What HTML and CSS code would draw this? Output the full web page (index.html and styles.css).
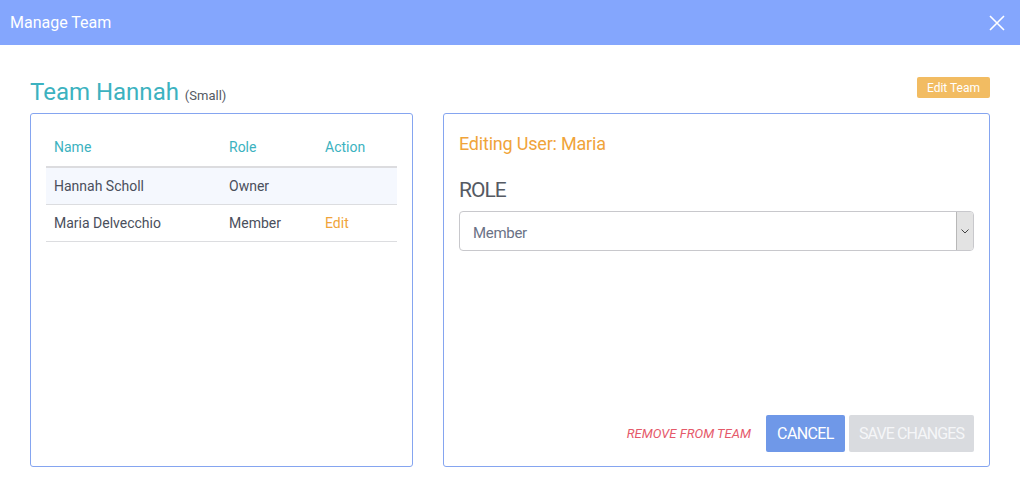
FILE: index.html
```html
<!DOCTYPE html>
<html lang="en">
<head>
    <meta charset="UTF-8">
    <title>Manage Team</title>
    <link rel="stylesheet" href="styles.css">
</head>
<body>
    <div class="modal">
        <div class="modal-header">
            <span class="modal-title">Manage Team</span>
            <button class="close-btn" aria-label="Close">
                <svg width="16" height="16" viewBox="0 0 16 16"><path d="M1 1L15 15M15 1L1 15" stroke="#fff" stroke-width="1.6" fill="none"/></svg>
            </button>
        </div>

        <div class="modal-body">
            <div class="team-head">
                <h2 class="team-name">Team Hannah <small>(Small)</small></h2>
                <button class="edit-team-btn">Edit Team</button>
            </div>

            <div class="panels">
                <div class="panel members">
                    <table class="team-table">
                        <thead>
                            <tr><th class="col-name">Name</th><th class="col-role">Role</th><th>Action</th></tr>
                        </thead>
                        <tbody>
                            <tr class="highlight"><td>Hannah Scholl</td><td>Owner</td><td></td></tr>
                            <tr><td>Maria Delvecchio</td><td>Member</td><td><a class="edit-link" href="#">Edit</a></td></tr>
                        </tbody>
                    </table>
                </div>

                <div class="panel editor">
                    <div class="editing-title">Editing User: Maria</div>
                    <label class="role-label" for="roleSelect">ROLE</label>
                    <div class="select-wrap">
                        <select id="roleSelect">
                            <option>Member</option>
                            <option>Owner</option>
                        </select>
                        <span class="select-arrow">
                            <svg width="8" height="5" viewBox="0 0 8 5"><path d="M0.5 0.5L4 4L7.5 0.5" stroke="#444" stroke-width="1" fill="none"/></svg>
                        </span>
                    </div>
                    <div class="editor-actions">
                        <a class="remove-link" href="#">REMOVE FROM TEAM</a>
                        <button class="btn btn-cancel">CANCEL</button>
                        <button class="btn btn-save" disabled>SAVE CHANGES</button>
                    </div>
                </div>
            </div>
        </div>
    </div>
</body>
</html>
```

FILE: styles.css
```css
* {
    margin: 0;
    padding: 0;
    box-sizing: border-box;
}

body {
    font-family: Roboto, 'Liberation Sans', sans-serif;
    background-color: #fff;
    color: #4a4f5c;
}

.modal-header {
    height: 45px;
    background-color: #84a6fd;
    display: flex;
    align-items: center;
    justify-content: space-between;
    padding: 0 15px 0 10px;
}

.modal-title {
    color: #fff;
    font-size: 16px;
}

.close-btn {
    background: none;
    border: none;
    display: flex;
    cursor: pointer;
}

.modal-body {
    padding: 31px 30px 20px;
}

.team-head {
    display: flex;
    justify-content: space-between;
    align-items: flex-start;
    height: 37px;
}

.team-name {
    font-weight: 400;
    font-size: 24px;
    color: #3cb2c0;
    line-height: 32px;
}

.team-name small {
    font-size: 13px;
    color: #555a63;
}

.edit-team-btn {
    margin-top: 1px;
    background-color: #f2bc62;
    color: #fff;
    border: none;
    border-radius: 2px;
    font-family: inherit;
    font-size: 12px;
    height: 21px;
    padding: 0 10px;
}

.panels {
    display: flex;
    gap: 30px;
}

.panel {
    border: 1px solid #85a5f0;
    border-radius: 3px;
    height: 354px;
}

.members {
    width: 383px;
    padding: 17px 15px;
}

.editor {
    flex: 1;
    padding: 19px 15px 14px;
    display: flex;
    flex-direction: column;
}

.team-table {
    width: 100%;
    border-collapse: collapse;
    font-size: 14px;
}

.team-table th {
    text-align: left;
    font-weight: 400;
    color: #3cb2c0;
    height: 36px;
    padding: 0 8px 4px;
    border-bottom: 2px solid #dcdcdf;
}

.team-table .col-name {
    width: 175px;
}

.team-table .col-role {
    width: 96px;
}

.team-table td {
    height: 37px;
    padding: 0 8px;
    border-bottom: 1px solid #dcdde0;
    color: #4a4f5c;
}

.team-table tr.highlight td {
    background-color: #f5f8fe;
}

.edit-link {
    color: #f0a43a;
    text-decoration: none;
}

.editing-title {
    color: #f0a43a;
    font-size: 18px;
    letter-spacing: -0.2px;
}

.role-label {
    margin-top: 24px;
    font-size: 21px;
    color: #555a63;
    letter-spacing: -1px;
}

.select-wrap {
    position: relative;
    margin-top: 9px;
    height: 40px;
}

.select-wrap select {
    width: 100%;
    height: 40px;
    appearance: none;
    border: 1px solid #c8c8cc;
    border-radius: 4px;
    background: #fff;
    font-family: inherit;
    font-size: 15px;
    color: #6a7286;
    padding: 3px 13px 0;
    letter-spacing: -0.3px;
}

.select-arrow {
    position: absolute;
    top: 1px;
    right: 1px;
    width: 17px;
    height: 38px;
    background: #e3e3e3;
    border-left: 1px solid #b8b8b8;
    border-radius: 0 3px 3px 0;
    display: flex;
    align-items: center;
    justify-content: center;
}

.editor-actions {
    margin-top: auto;
    display: flex;
    justify-content: flex-end;
    align-items: center;
    gap: 4px;
}

.remove-link {
    color: #e5596a;
    font-style: italic;
    font-size: 13px;
    text-decoration: none;
    margin-right: 11px;
}

.btn {
    height: 37px;
    border: none;
    border-radius: 2px;
    color: #fff;
    font-family: inherit;
    font-size: 16px;
    letter-spacing: -0.6px;
}

.btn-cancel {
    width: 79px;
    background-color: #6f98e8;
}

.btn-save {
    width: 125px;
    background-color: #d9dbdf;
    color: #f5f6f8;
    letter-spacing: -0.9px;
}
```
